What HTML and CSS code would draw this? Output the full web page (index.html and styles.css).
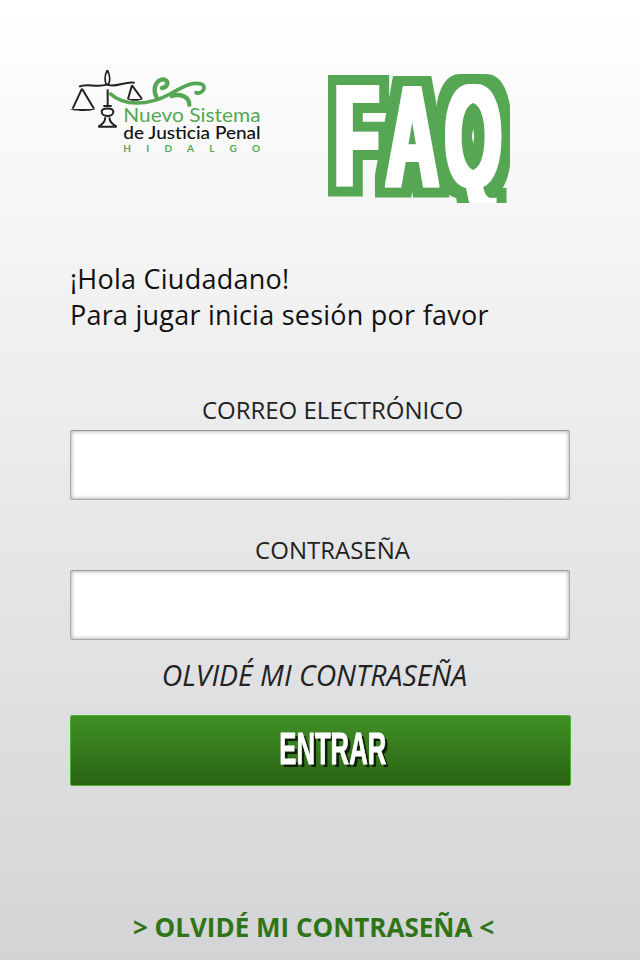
FILE: index.html
```html
<!DOCTYPE html>
<html lang="en">
<head>
    <meta charset="UTF-8">
    <meta name="viewport" content="width=device-width, initial-scale=1.0">
    <title>FAQ</title>
    <link rel="stylesheet" href="styles.css">
</head>
<body>
    <div class="container">
        <div class="header">
            <svg class="logo" viewBox="30 30 573 255" width="191" height="85">
                <!-- scale -->
                <g class="scale-line">
                    <path d="M57 80C80 68 110 84 140 74C170 84 195 62 224 68"/>
                    <path d="M66 86L38 146M66 86L102 146"/>
                    <path d="M216 76L204 117M216 76L246 117"/>
                    <path d="M143 88V135"/>
                    <path d="M130 138H155M125 155C125 142 160 142 160 155C160 172 125 172 125 155Z"/>
                    <path d="M136 172C136 185 130 192 115 200H170C154 192 149 185 148 172"/>
                </g>
                <path class="scale-pan" d="M30 147H106C95 155 42 155 30 147ZM201 117H248C240 124 210 124 201 117Z"/>
                <path class="scale-tip" d="M142 30C134 45 134 60 138 72H146C151 60 150 45 142 30Z"/>
                <!-- swoosh -->
                <g class="swoosh">
                    <path class="swoosh-main" d="M152 102C190 138 265 138 330 102C370 80 400 62 428 74C440 84 425 104 408 98"/>
                    <path class="swoosh-curl" d="M290 112C275 85 290 58 310 58C328 60 325 82 306 84"/>
                    <path class="swoosh-curl" d="M335 108C360 100 388 110 388 134"/>
                </g>
                <text class="logo-name" x="190" y="185" textLength="412" lengthAdjust="spacingAndGlyphs">Nuevo Sistema</text>
                <text class="logo-sub" x="190" y="238" textLength="412" lengthAdjust="spacingAndGlyphs">de Justicia Penal</text>
                <text class="logo-state" x="190" y="276" textLength="410">HIDALGO</text>
            </svg>
            <svg class="faq" viewBox="0 0 190 170" width="190" height="170">
                <!-- white fill and green outline are both grown from the one text -->
                <filter id="faq-outline" filterUnits="userSpaceOnUse" x="0" y="0" width="182" height="133">
                    <feMorphology in="SourceAlpha" operator="dilate" radius="13 11" result="outer"/>
                    <feFlood flood-color="#55a753"/>
                    <feComposite in2="outer" operator="in" result="green"/>
                    <feMorphology in="SourceAlpha" operator="dilate" radius="3 1" result="inner"/>
                    <feFlood flood-color="#ffffff"/>
                    <feComposite in2="inner" operator="in" result="white"/>
                    <feMerge>
                        <feMergeNode in="green"/>
                        <feMergeNode in="white"/>
                    </feMerge>
                </filter>
                <g filter="url(#faq-outline)">
                    <text class="faq-text" transform="scale(0.5 1)" x="13 116 234" y="116">FAQ</text>
                </g>
            </svg>
        </div>

        <p class="greeting">¡Hola Ciudadano!<br>Para jugar inicia sesión por favor</p>

        <form class="login">
            <div class="form-group">
                <label for="email">CORREO ELECTRÓNICO</label>
                <input type="text" id="email">
            </div>
            <div class="form-group">
                <label for="password">CONTRASEÑA</label>
                <input type="password" id="password">
            </div>
            <a class="forgot" href="#">OLVIDÉ MI CONTRASEÑA</a>
            <button class="enter" type="button"><span>ENTRAR</span></button>
        </form>

        <a class="footer-link" href="#">&gt; OLVIDÉ MI CONTRASEÑA &lt;</a>
    </div>
</body>
</html>
```

FILE: styles.css
```css
html, body {
    margin: 0;
    height: 100%;
}
body {
    font-family: "Open Sans", "Noto Sans", sans-serif;
    background: linear-gradient(#ffffff 0%, #d3d4d6 100%);
    overflow: hidden;
}
.container {
    height: 960px;
    box-sizing: border-box;
    padding: 70px 69px 0 70px;
    display: flex;
    flex-direction: column;
}
.header {
    display: flex;
    align-items: flex-start;
    height: 140px;
}
.logo {
    display: block;
    flex: none;
}
.scale-line {
    fill: none;
    stroke: #222;
    stroke-width: 6;
}
.scale-pan {
    fill: #222;
}
.scale-tip {
    fill: #fff;
    stroke: #222;
    stroke-width: 5;
}
.swoosh {
    fill: none;
    stroke: #55a753;
    stroke-linecap: round;
}
.swoosh-main {
    stroke-width: 11;
}
.swoosh-curl {
    stroke-width: 13;
}
.logo-name {
    font-family: "Lato", sans-serif;
    font-weight: 400;
    font-size: 60px;
    fill: #55a753;
}
.logo-sub {
    font-family: "Lato", sans-serif;
    font-weight: 500;
    font-size: 50px;
    fill: #111;
}
.logo-state {
    font-family: "Lato", sans-serif;
    font-weight: 700;
    font-size: 30px;
    fill: #55a753;
}
.faq {
    display: block;
    flex: none;
    margin-left: 67px;
}
.faq-text {
    font-family: "Liberation Sans", sans-serif;
    font-weight: 700;
    font-size: 145px;
}
.greeting {
    margin: 51px 0 0;
    font-size: 27px;
    letter-spacing: 0.24px;
    line-height: 36px;
    color: #111;
}
.login {
    margin-top: 59px;
}
.form-group + .form-group {
    margin-top: 32px;
}
label {
    display: block;
    padding: 0 0 2px 24px;
    text-align: center;
    font-size: 24px;
    line-height: 36px;
    color: #222;
}
input {
    display: block;
    width: 500px;
    height: 70px;
    box-sizing: border-box;
    border: 1px solid #a9aaaa;
    border-top-color: #999;
    border-radius: 2px;
    background: #fff;
    box-shadow: inset 0 0 4px #999;
}
.forgot {
    display: block;
    margin-top: 16px;
    padding-right: 12px;
    text-align: center;
    font-size: 28.4px;
    font-style: italic;
    line-height: 38px;
    color: #222;
    text-decoration: none;
}
.enter {
    display: block;
    width: 501px;
    height: 71px;
    margin-top: 21px;
    padding: 0 0 4px 25px;
    border: 1px solid #4db02a;
    border-radius: 2px;
    background: linear-gradient(#3f9026, #2a6314);
}
.enter span {
    display: inline-block;
    font-family: "Liberation Sans", sans-serif;
    font-weight: 700;
    font-size: 45px;
    line-height: 60px;
    color: #fff;
    -webkit-text-stroke: 1px #fff;
    text-shadow: 5px 3px 0 #0d1f06;
    transform: scaleX(0.57);
}
.footer-link {
    margin-top: 121px;
    padding-right: 14px;
    text-align: center;
    font-size: 26px;
    font-weight: 700;
    line-height: 40px;
    color: #2f7417;
    text-decoration: none;
}
```
